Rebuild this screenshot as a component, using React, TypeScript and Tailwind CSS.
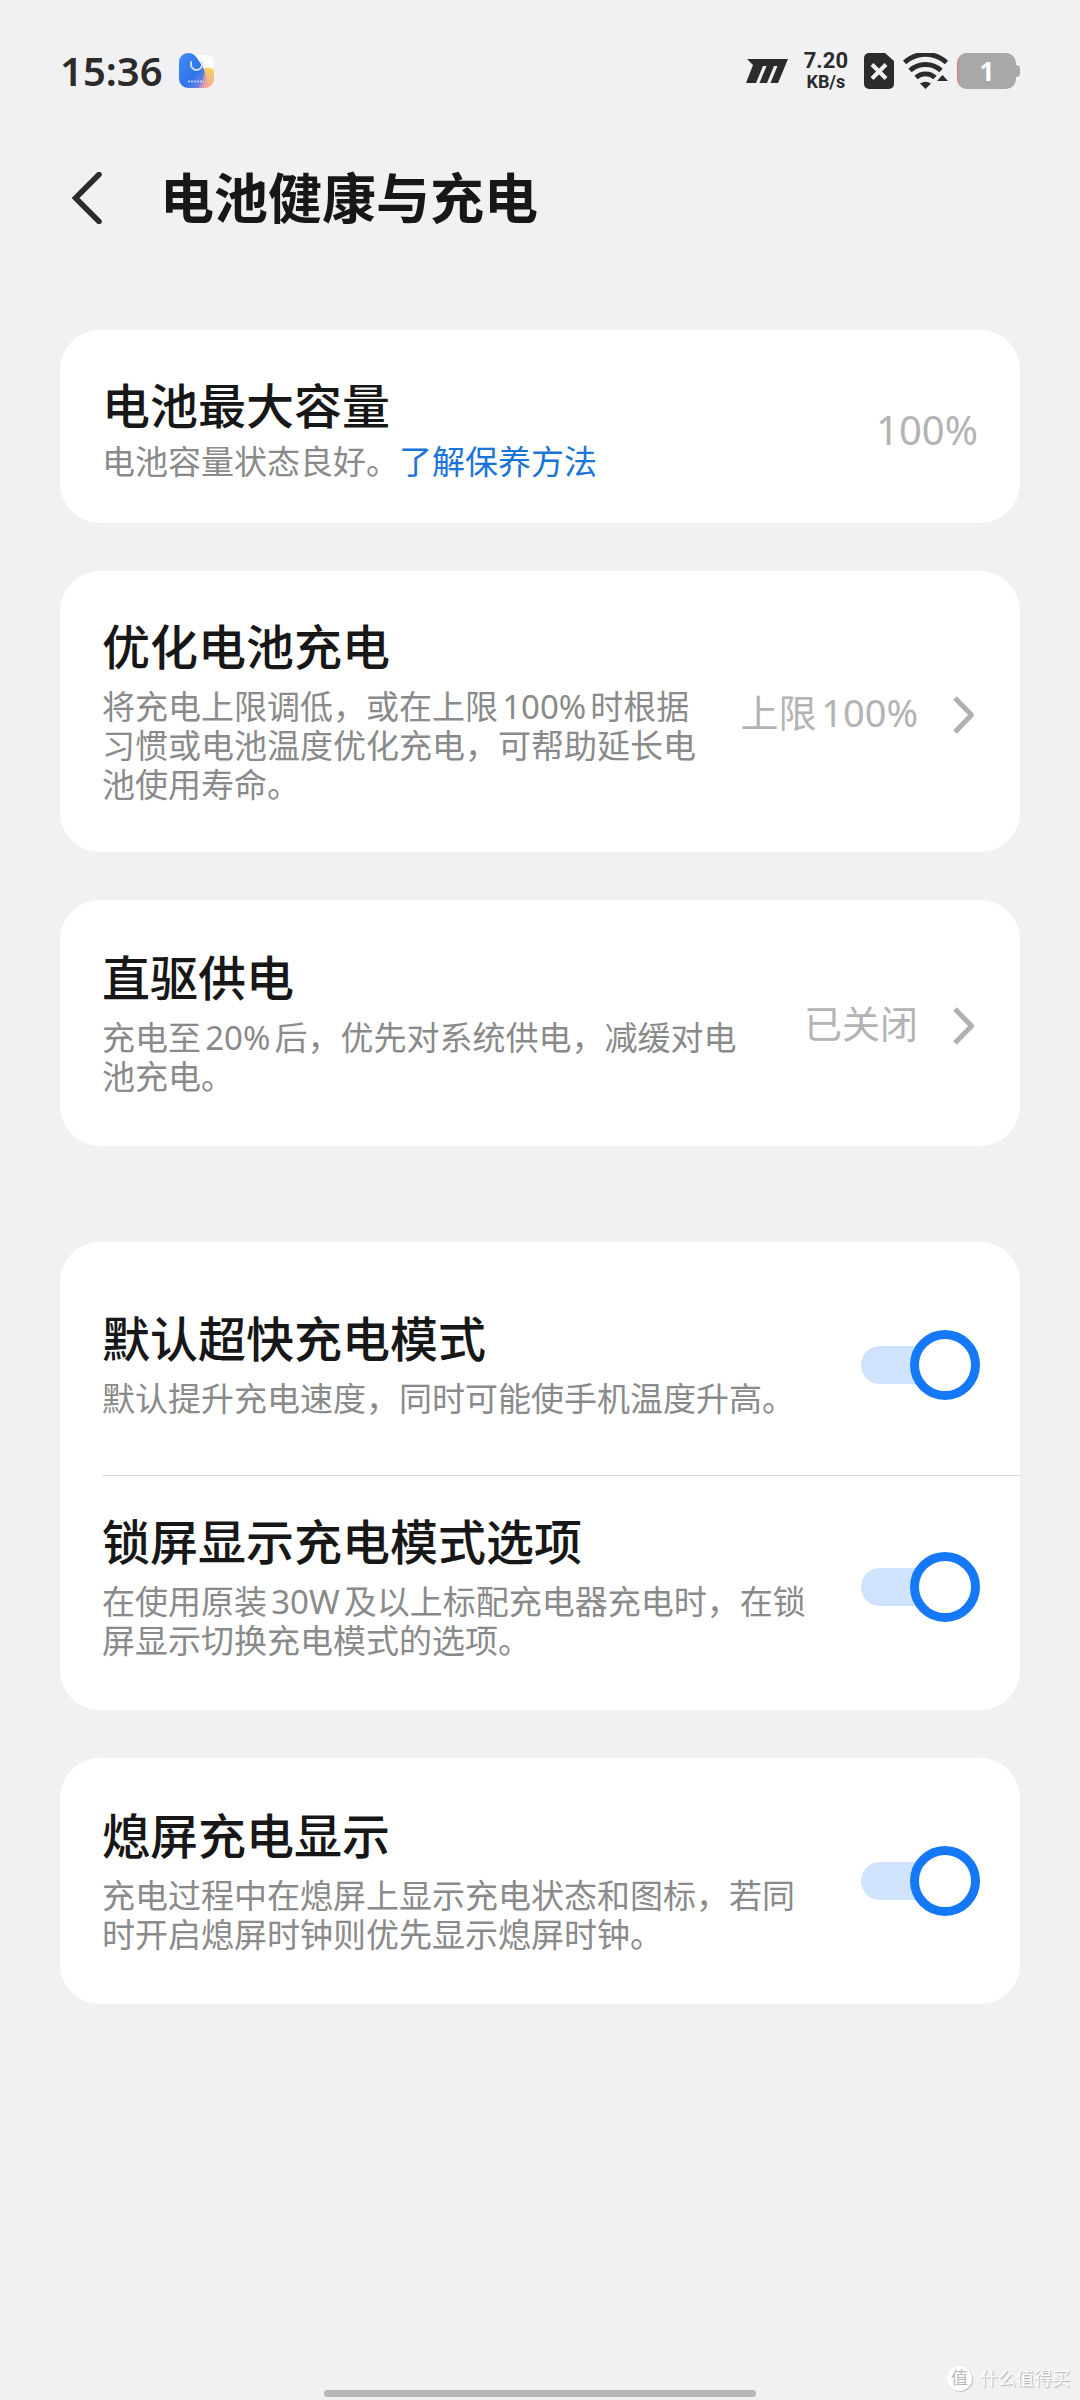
import { useState, type ReactNode } from 'react'

interface RowTextProps {
  title: string
  desc: ReactNode
  gap: string
}

function RowText({ title, desc, gap }: RowTextProps) {
  return (
    <div className="min-w-0 flex-1">
      <h2 className="text-[48px] leading-[56px] font-medium text-[#171717]">{title}</h2>
      <p className={`${gap} text-[33px] leading-[39px] text-[#8a8a8a] [text-autospace:normal]`}>{desc}</p>
    </div>
  )
}

function LinkRow({ title, desc, value, className }: { title: string; desc: string; value: string; className: string }) {
  return (
    <button type="button" className={`flex w-full items-center gap-10 rounded-[40px] bg-white pr-10 pl-[42px] text-left ${className}`}>
      <RowText title={title} desc={desc} gap="mt-3" />
      <span className="flex shrink-0 items-center gap-[34px]">
        <span className="text-[38px] leading-[48px] text-[#b3b3b3] [text-autospace:normal]">{value}</span>
        <svg className="h-11 w-7" viewBox="0 0 28 44" fill="none" stroke="#b0b0b0" strokeWidth="5" aria-hidden="true">
          <path d="M3 8 19.500 25 3 42" strokeLinejoin="round" />
        </svg>
      </span>
    </button>
  )
}

function ToggleRow({ title, desc, className }: { title: string; desc: string; className: string }) {
  const [on, setOn] = useState(true)

  return (
    <div className={`flex items-center gap-10 pr-10 pl-[42px] ${className}`}>
      <RowText title={title} desc={desc} gap="mt-3" />
      <label className="relative flex h-[70px] w-[119px] shrink-0 cursor-pointer items-center">
        <input
          type="checkbox"
          role="switch"
          aria-label={title}
          checked={on}
          onChange={e => setOn(e.target.checked)}
          className="peer sr-only"
        />
        <span className="h-[38px] w-full rounded-full bg-[#dddddf] peer-checked:bg-[#cfe3fd]" />
        <span className="absolute left-0 size-[70px] rounded-full border-[9px] border-[#b0b0b0] bg-white peer-checked:right-0 peer-checked:left-auto peer-checked:border-[#1478f7]" />
      </label>
    </div>
  )
}

function AppIcon() {
  return (
    <svg className="size-9" viewBox="0 0 36 36" aria-hidden="true">
      <defs>
        <linearGradient id="blue" x1="0" y1="0" x2="1" y2="1">
          <stop offset="0" stopColor="#3f8cf0" />
          <stop offset="0.6" stopColor="#2f74ea" />
          <stop offset="1" stopColor="#8e8fe0" />
        </linearGradient>
        <linearGradient id="warm" x1="0.6" y1="0" x2="0.3" y2="1">
          <stop offset="0" stopColor="#f5d163" />
          <stop offset="1" stopColor="#f3a3a0" />
        </linearGradient>
        <clipPath id="tile">
          <rect width="35" height="35" rx="9" />
        </clipPath>
      </defs>
      <g clipPath="url(#tile)">
        <path d="M10 2h25v33H10z" fill="#fbfcfe" />
        <path d="M22 18c3-4 9-4 13-1v18H18z" fill="url(#warm)" />
        <path d="M0 0h9c8 0 9 6 13 11 4 6 7 16 1 24H0z" fill="url(#blue)" />
        <path d="M19 35c4-4 6-9 5-15 5 4 6 10 3 15z" fill="#ee9d9c" opacity="0.6" />
      </g>
      <path d="M12 9v2.500a5.500 5.500 0 0 0 11 0V9" fill="none" stroke="#d5e4f8" strokeWidth="1.800" strokeLinecap="round" />
      <path d="M9 28.500h16" stroke="#e8f0ff" strokeWidth="2" strokeDasharray="2 1" opacity="0.7" />
    </svg>
  )
}

function StatusIcons() {
  return (
    <div className="flex items-center text-[#2b2b2b]">
      <svg className="h-6 w-[42px]" viewBox="0 0 42 24" fill="currentColor" aria-hidden="true">
        <path d="M1 0h41L32 24h-7.500l7-17h-3.500l-7 17h-7.500l7-17H17L10 24H0L7 6z" />
      </svg>
      <div className="ml-4 text-center font-['Roboto',sans-serif] font-bold">
        <p className="text-[22px] leading-[22px]">7.20</p>
        <p className="text-[18px] leading-5">KB/s</p>
      </div>
      <svg className="ml-4 h-9 w-[30px]" viewBox="0 0 30 36" aria-hidden="true">
        <path d="M5 0h16l9 8v23a5 5 0 0 1-5 5H5a5 5 0 0 1-5-5V5a5 5 0 0 1 5-5z" fill="currentColor" />
        <path d="M8 11.500 22 25.500M22 11.500 8 25.500" stroke="#f1f1f3" strokeWidth="4" />
      </svg>
      <svg className="ml-[9px] h-9 w-[46px]" viewBox="0 0 46 36" fill="none" stroke="currentColor" strokeWidth="4.800" aria-hidden="true">
        <path d="M1.500 9.500a31 31 0 0 1 42 0" />
        <path d="M7 17.500a23 23 0 0 1 31 0" />
        <path d="M13 24.500a14 14 0 0 1 19 0" />
        <path d="M17 30.500q5.500-3.500 11 0L22.500 36z" fill="currentColor" stroke="none" />
        <path d="M39.500 22 45 28H34z" fill="currentColor" stroke="none" />
      </svg>
      <div className="ml-2 flex items-center">
        <span className="flex h-9 w-[59px] items-center justify-center rounded-[10px] border-l border-[#e57368] bg-[#a8a8a9] font-['Noto_Sans',sans-serif] text-[26px] leading-9 font-bold text-white">
          1
        </span>
        <span className="h-3 w-1 rounded-r-sm bg-[#a8a8a9]" />
      </div>
    </div>
  )
}

export default function App() {
  return (
    <div
      lang="zh-CN"
      className="relative flex min-h-screen flex-col bg-[#f1f1f3] font-['Noto_Sans','Noto_Sans_CJK_SC',sans-serif]"
    >
      <div className="flex h-[142px] items-center justify-between px-[60px]">
        <div className="flex items-center gap-4">
          <span className="text-[40px] leading-[48px] font-semibold text-[#2b2b2b]">15:36</span>
          <AppIcon />
        </div>
        <StatusIcons />
      </div>

      <header className="flex h-28 items-center gap-14 px-[68px]">
        <button type="button" aria-label="返回">
          <svg className="h-[52px] w-9" viewBox="0 0 36 52" fill="none" stroke="#2b2b2b" strokeWidth="5.500" aria-hidden="true">
            <path d="M31 2.500 7.500 26 31 49.500" strokeLinecap="round" />
          </svg>
        </button>
        <h1 className="text-[54px] leading-[64px] font-bold text-[#171717]">电池健康与充电</h1>
      </header>

      <main className="flex flex-col gap-12 px-[60px] pt-[76px]">
        <section className="flex items-center gap-10 rounded-[40px] bg-white px-[42px] pt-12 pb-[42px]">
          <RowText
            title="电池最大容量"
            desc={<>电池容量状态良好。<a href="#care" className="text-[#1b74d8]">了解保养方法</a></>}
            gap="mt-2"
          />
          <span className="text-[40px] leading-[48px] text-[#b3b3b3]">100%</span>
        </section>

        <LinkRow
          title="优化电池充电"
          desc="将充电上限调低，或在上限100%时根据习惯或电池温度优化充电，可帮助延长电池使用寿命。"
          value="上限100%"
          className="py-12"
        />
        <LinkRow
          title="直驱供电"
          desc="充电至20%后，优先对系统供电，减缓对电池充电。"
          value="已关闭"
          className="py-[50px]"
        />

        <section className="mt-12 rounded-[40px] bg-white py-3">
          <ToggleRow title="默认超快充电模式" desc="默认提升充电速度，同时可能使手机温度升高。" className="py-[57px]" />
          <hr className="ml-[42px] border-[#dadadc]" />
          <ToggleRow
            title="锁屏显示充电模式选项"
            desc="在使用原装30W及以上标配充电器充电时，在锁屏显示切换充电模式的选项。"
            className="py-[38px]"
          />
        </section>

        <section className="rounded-[40px] bg-white">
          <ToggleRow
            title="熄屏充电显示"
            desc="充电过程中在熄屏上显示充电状态和图标，若同时开启熄屏时钟则优先显示熄屏时钟。"
            className="py-[50px]"
          />
        </section>
      </main>

      <div className="mx-auto mt-auto mb-[3px] h-[7px] w-2/5 rounded-full bg-[#b7b7b9]" />

      <div className="absolute right-2.5 bottom-2 flex items-center gap-2 text-white">
        <span className="flex size-[25px] items-center justify-center rounded-full bg-white text-[17px] leading-6 text-[#b8b8b8] shadow-[1px_1px_1px_#c4c4c4]">值</span>
        <span className="text-[18px] leading-7 [text-shadow:1px_1px_1px_#b0b0b0]">什么值得买</span>
      </div>
    </div>
  )
}
